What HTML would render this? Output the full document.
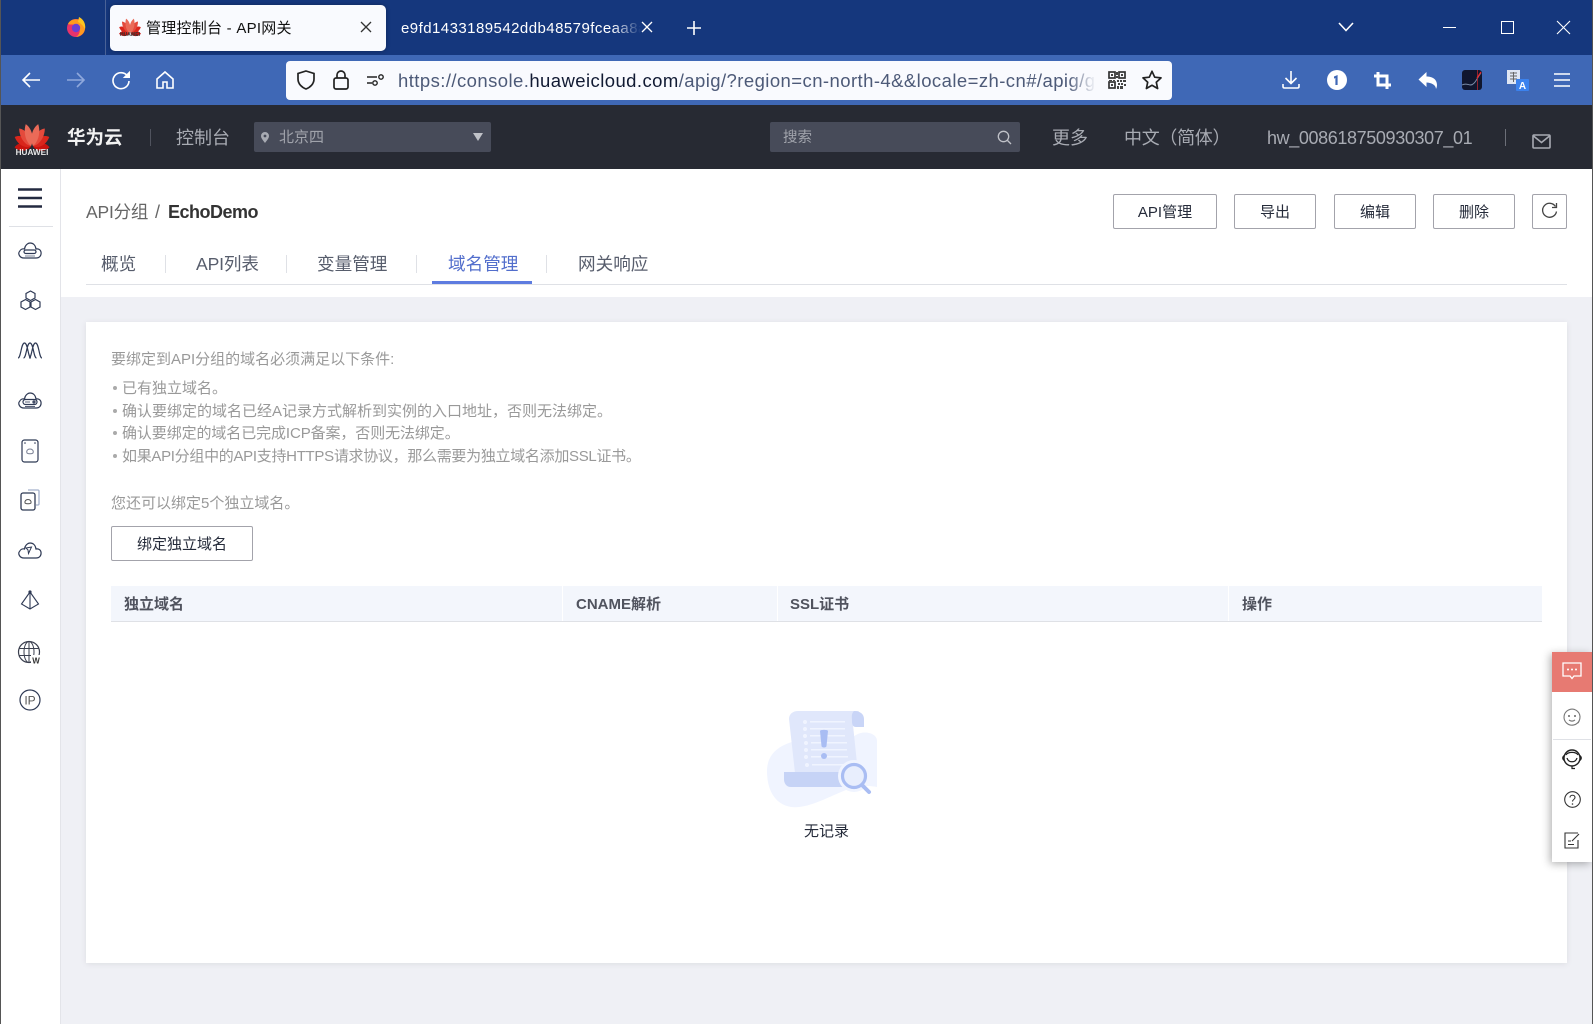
<!DOCTYPE html>
<html lang="zh-CN"><head><meta charset="utf-8"><title>管理控制台 - API网关</title>
<style>
html,body{margin:0;padding:0;width:1593px;height:1024px;overflow:hidden;background:#eff0f5;font-family:"Liberation Sans","Noto Sans CJK SC",sans-serif;}
.a{position:absolute;white-space:nowrap;}
.t{position:absolute;white-space:nowrap;line-height:24px;height:24px;}
.b{position:absolute;box-sizing:border-box;border:1px solid #a3a3ab;border-radius:2px;background:#fff;color:#252b3a;font-size:15px;text-align:center;white-space:nowrap;}
svg{position:absolute;overflow:visible;}
.w{fill:none;stroke:#fff;stroke-width:1.6;}
.k{fill:none;stroke:#1f2a44;stroke-width:1.5;}
.s{fill:none;stroke:#2f3a55;stroke-width:1.2;}
.g{fill:none;stroke:#333;stroke-width:1.1;}
.hd{font-weight:700;font-size:15px;color:#50535e;top:593px;}
.li{font-size:15px;color:#999;left:122px;}
.dot{position:absolute;left:113px;width:4px;height:4px;border-radius:50%;background:#aaa;}
.sp{position:absolute;width:1px;height:18px;top:255px;background:#dfe1e6;}
.tab{font-size:17.6px;color:#575d6c;top:252px;}
</style></head><body>
<svg width="1" height="1" style="position:absolute;left:-10px;top:-10px"><defs>
<g id="hw">
<g fill="#d9261c">
<path fill="#c8140f" d="M0 0C-5 -4 -5.500 -11 -3 -15.500C2 -12 3.500 -5 0 0Z" transform="translate(-1 .6) rotate(-80) scale(.9)"/>
<path d="M0 0C-5 -4 -5.500 -11 -3 -15.500C2 -12 3.500 -5 0 0Z" transform="translate(-1 .3) rotate(-54) scale(.98)"/>
<path fill="#e44a3c" d="M0 0C-5 -4 -5.500 -11 -3 -15.500C2 -12 3.500 -5 0 0Z" transform="translate(-1 0) rotate(-29)"/>
<path fill="#ea6a58" d="M0 0C-5 -4 -5.500 -11 -3 -15.500C2 -12 3.500 -5 0 0Z" transform="translate(-.8 0) rotate(-6)"/>
<path fill="#c8140f" d="M0 0C5 -4 5.500 -11 3 -15.500C-2 -12 -3.500 -5 0 0Z" transform="translate(1 .6) rotate(80) scale(.9)"/>
<path d="M0 0C5 -4 5.500 -11 3 -15.500C-2 -12 -3.500 -5 0 0Z" transform="translate(1 .3) rotate(54) scale(.98)"/>
<path fill="#e44a3c" d="M0 0C5 -4 5.500 -11 3 -15.500C-2 -12 -3.500 -5 0 0Z" transform="translate(1 0) rotate(29)"/>
<path fill="#ea6a58" d="M0 0C5 -4 5.500 -11 3 -15.500C-2 -12 -3.500 -5 0 0Z" transform="translate(.8 0) rotate(6)"/>
</g></g>
</defs></svg>

<!-- tab strip -->
<div class="a" style="left:0;top:0;width:1593px;height:55px;background:#15377d"></div>
<div class="a" style="left:0;top:55px;width:1593px;height:50px;background:#3f68b6"></div>
<div class="a" style="left:105px;top:0;width:1px;height:55px;background:#4a6296"></div>
<svg style="left:66px;top:17px" width="20" height="20" viewBox="0 0 20 20"><circle cx="10" cy="11" r="9" fill="#e8336b"/><path d="M2 7C5 0 16 1 19 8C20 14 17 19 10 20C15 17 15 10 10 8C7 7 4 8 2 7Z" fill="#ff9a1f"/><path d="M13 0C17 2 20 6 19 12C17 8 14 6 12 5Z" fill="#ffc61f"/><circle cx="10" cy="11" r="4.2" fill="#6b3fd4"/></svg>
<div class="a" style="left:110px;top:5px;width:276px;height:46px;background:#f9fafe;border-radius:5px;box-shadow:0 0 4px rgba(0,0,0,.3)"></div>
<svg style="left:120px;top:15px" width="20" height="20"><use href="#hw" transform="translate(10 18) scale(.72 .95)"/></svg>
<div class="t" style="left:120px;top:32px;font-size:5px;font-weight:700;color:#333;line-height:7px;height:7px;width:20px;text-align:center">HUAWEI</div>
<div class="t" style="left:146px;top:17px;font-size:15px;color:#111;letter-spacing:.25px">管理控制台 - API网关</div>
<svg style="left:361px;top:22px" width="10" height="10"><path d="M0 0L10 10M10 0L0 10" fill="none" stroke="#333" stroke-width="1.3"/></svg>
<div class="t" style="left:401px;top:17px;width:240px;overflow:hidden;font-size:15px;letter-spacing:.45px;color:#fff;-webkit-mask-image:linear-gradient(90deg,#000 88%,transparent);mask-image:linear-gradient(90deg,#000 88%,transparent)">e9fd1433189542ddb48579fceaa8a</div>
<svg style="left:642px;top:22px" width="10" height="10"><path d="M0 0L10 10M10 0L0 10" fill="none" stroke="#fff" stroke-width="1.3"/></svg>
<svg style="left:687px;top:21px" width="14" height="14"><path d="M7 0V14M0 7H14" fill="none" stroke="#fff" stroke-width="1.6"/></svg>
<svg style="left:1338px;top:22px" width="16" height="10"><path d="M1 1L8 8.5L15 1" class="w"/></svg>
<div class="a" style="left:1443px;top:27px;width:13px;height:1px;background:#fff"></div>
<div class="a" style="left:1501px;top:21px;width:11px;height:11px;border:1px solid #fff"></div>
<svg style="left:1557px;top:21px" width="13" height="13"><path d="M0 0L13 13M13 0L0 13" fill="none" stroke="#fff" stroke-width="1.1"/></svg>

<!-- toolbar -->
<svg style="left:21px;top:71px" width="20" height="18"><path d="M19 9H2M9 2L2 9L9 16" class="w"/></svg>
<svg style="left:66px;top:71px" width="20" height="18"><path d="M1 9H18M11 2L18 9L11 16" fill="none" stroke="#8fa8dc" stroke-width="1.6"/></svg>
<svg style="left:111px;top:70px" width="20" height="20"><path d="M16.5 6A8 8 0 1 0 18 11" class="w"/><path d="M18.5 2V7.5H13Z" fill="#fff" stroke="#fff"/></svg>
<svg style="left:156px;top:71px" width="18" height="18"><path d="M1 8L9 1L17 8V17H11V11H7V17H1Z" class="w"/></svg>
<div class="a" style="left:286px;top:61px;width:886px;height:39px;background:#f9fafe;border-radius:4px"></div>
<svg style="left:297px;top:70px" width="18" height="20"><path d="M9 1L17 3.5V9C17 14 13 17.5 9 19C5 17.5 1 14 1 9V3.5Z" class="k" style="stroke:#222;stroke-width:1.7"/></svg>
<svg style="left:333px;top:70px" width="16" height="20"><rect x="1" y="8" width="14" height="11" rx="2" class="k" style="stroke:#222;stroke-width:1.7"/><path d="M4 8V5A4 4 0 0 1 12 5V8" class="k" style="stroke:#222;stroke-width:1.7"/></svg>
<svg style="left:367px;top:74px" width="18" height="12"><path d="M0 3H10M0 9H5" fill="none" stroke="#222" stroke-width="1.5"/><circle cx="14" cy="3" r="2.2" fill="none" stroke="#222" stroke-width="1.4"/><circle cx="8" cy="9" r="2.2" fill="none" stroke="#222" stroke-width="1.4"/></svg>
<div class="t" style="left:398px;top:69px;width:698px;overflow:hidden;font-size:18.5px;letter-spacing:.43px;color:#4d5a78;-webkit-mask-image:linear-gradient(90deg,#000 96%,transparent);mask-image:linear-gradient(90deg,#000 96%,transparent)">https://console.<span style="color:#111a33">huaweicloud.com</span>/apig/?region=cn-north-4&amp;&amp;locale=zh-cn#/apig/g</div>
<svg style="left:1108px;top:71px" width="18" height="18"><g fill="none" stroke="#333" stroke-width="1.7"><rect x="1" y="1" width="6" height="6"/><rect x="11" y="1" width="6" height="6"/><rect x="1" y="11" width="6" height="6"/></g><g fill="#444"><rect x="3" y="3" width="2" height="2"/><rect x="13" y="3" width="2" height="2"/><rect x="3" y="13" width="2" height="2"/><rect x="9" y="9" width="2" height="2"/><rect x="12" y="9" width="2" height="2"/><rect x="15" y="9" width="3" height="2"/><rect x="10" y="12" width="2" height="2"/><rect x="13" y="12" width="2" height="2"/><rect x="16" y="13" width="2" height="2"/><rect x="9" y="15" width="2" height="3"/><rect x="12" y="15" width="3" height="3"/><rect x="8" y="1" width="2" height="3"/><rect x="8" y="5" width="2" height="2"/><rect x="1" y="9" width="3" height="1"/><rect x="5" y="9" width="2" height="1"/></g></svg>
<svg style="left:1142px;top:70px" width="20" height="20"><path d="M10 1.3L12.7 7.2L19 7.9L14.3 12.2L15.6 18.5L10 15.3L4.4 18.5L5.7 12.2L1 7.9L7.3 7.2Z" fill="none" stroke="#222" stroke-width="1.7" stroke-linejoin="round"/></svg>
<svg style="left:1282px;top:70px" width="18" height="20"><path d="M9 1V13M3.5 8L9 13.5L14.5 8M1 14V16.5C1 17.5 1.7 18 2.5 18H15.5C16.3 18 17 17.5 17 16.5V14" class="w"/></svg>
<svg style="left:1327px;top:70px" width="20" height="20"><circle cx="10" cy="10" r="10" fill="#fff"/><path d="M7 6.5L10.6 5V15H8.4V8L7 8.6Z" fill="#3f68b6"/></svg>
<svg style="left:1374px;top:72px" width="17" height="17"><path d="M4 0V13H17M0 4H13V17" fill="none" stroke="#fff" stroke-width="3"/></svg>
<svg style="left:1418px;top:72px" width="19" height="17"><path d="M8.5 0V4.5C14 4.5 19 7 19 13C19 14.500 18.500 16 18 17C18 13 13 10.500 8.500 10.500V15L0.500 7.500Z" fill="#fff"/></svg>
<svg style="left:1462px;top:70px" width="20" height="20"><rect width="20" height="20" rx="3" fill="#10162e"/><path d="M0 15C5 12 8 17 11 14C14 12 15 8 19 3" fill="none" stroke="#7a8ca8" stroke-width="1"/><path d="M15.500 0V20" stroke="#b3262e" stroke-width=".8"/><path d="M15 8L19 2" stroke="#e3282e" stroke-width="1.2"/></svg>
<svg style="left:1507px;top:70px" width="22" height="21"><rect x="0" y="0" width="13" height="14" fill="#dfe6f3"/><path d="M3 3H10M3 6H10M3 9H10M6.5 2V12" stroke="#666" stroke-width="1"/><rect x="9" y="9" width="13" height="12" rx="1" fill="#3b82ee"/><text x="15.5" y="19" font-size="10" font-weight="700" fill="#fff" text-anchor="middle" font-family="Liberation Sans">A</text></svg>
<svg style="left:1554px;top:73px" width="16" height="14"><path d="M0 1H16M0 7H16M0 13H16" class="w" style="stroke-width:1.4"/></svg>

<!-- header -->
<div class="a" style="left:0;top:105px;width:1593px;height:64px;background:#272a33"></div>
<svg style="left:12px;top:120px" width="40" height="28"><use href="#hw" transform="translate(20 26) scale(1.15 1.45)"/></svg>
<div class="t" style="left:12px;top:147px;width:40px;text-align:center;font-size:8.2px;font-weight:700;color:#e8e8e8;line-height:11px;height:11px">HUAWEI</div>
<div class="t" style="left:67px;top:126px;font-size:18.5px;font-weight:700;color:#f2f2f2">华为云</div>
<div class="a" style="left:150px;top:129px;width:1px;height:17px;background:#50535e"></div>
<div class="t" style="left:176px;top:126px;font-size:18px;color:#a8abb3">控制台</div>
<div class="a" style="left:254px;top:122px;width:237px;height:30px;background:#474b59;border-radius:2px"></div>
<svg style="left:261px;top:132px" width="8" height="11"><path d="M4 0A4 4 0 0 1 8 4C8 6.5 5 9.5 4 11C3 9.5 0 6.5 0 4A4 4 0 0 1 4 0Z" fill="#a8abb3"/><circle cx="4" cy="4" r="1.4" fill="#474b59"/></svg>
<div class="t" style="left:279px;top:126px;font-size:15px;color:#a0a3ab">北京四</div>
<svg style="left:473px;top:133px" width="10" height="8"><path d="M0 0H10L5 8Z" fill="#c0c2c8"/></svg>
<div class="a" style="left:770px;top:122px;width:250px;height:30px;background:#474b59;border-radius:2px"></div>
<div class="t" style="left:783px;top:126px;font-size:14.5px;color:#a0a3ab">搜索</div>
<svg style="left:997px;top:130px" width="15" height="15"><circle cx="6.5" cy="6.5" r="5.2" fill="none" stroke="#c0c2c8" stroke-width="1.3"/><path d="M10.5 10.5L14 14" stroke="#c0c2c8" stroke-width="1.3"/></svg>
<div class="t" style="left:1052px;top:126px;font-size:18px;color:#a8abb3">更多</div>
<div class="t" style="left:1124px;top:126px;font-size:18px;color:#a8abb3;letter-spacing:-.3px">中文（简体）</div>
<div class="t" style="left:1267px;top:126px;font-size:18px;color:#a8abb3;letter-spacing:-.38px">hw_008618750930307_01</div>
<div class="a" style="left:1505px;top:129px;width:1px;height:17px;background:#6c6f78"></div>
<svg style="left:1532px;top:134px" width="19" height="15"><rect x="1" y="1" width="17" height="13" rx="1" fill="none" stroke="#a8abb3" stroke-width="1.6"/><path d="M1.5 2L9.5 8.5L17.5 2" fill="none" stroke="#a8abb3" stroke-width="1.6"/></svg>

<!-- sidebar -->
<div class="a" style="left:0;top:169px;width:60px;height:855px;background:#fff;border-right:1px solid #e3e4e9"></div>
<svg style="left:18px;top:188px" width="24" height="20"><path d="M0 1.5H24M0 10H24M0 18.5H24" fill="none" stroke="#232a40" stroke-width="2.4"/></svg>
<div class="a" style="left:9px;top:226px;width:44px;height:1px;background:#dfe1e6"></div>
<svg style="left:18px;top:242px" width="24" height="17"><path d="M6 16C1 16 0 11 1.500 9.500C2.500 7 5 6.500 6.500 7C7 3 10 1 12 1C15 1 17.500 3 18 7C20 6.500 22.500 7.500 23 10C23.500 13 22 16 18 16Z" class="s"/><rect x="6" y="8" width="12" height="3.500" rx="1.700" class="s"/><path d="M7 14H17" fill="none" stroke="#7a8094" stroke-width="1"/></svg>
<svg style="left:20px;top:290px" width="21" height="21"><path d="M10.5 1L15 3.5V8L10.5 10.5L6 8V3.5Z M5.5 9.5L10 12V17L5.5 19.5L1 17V12Z M15.5 9.5L20 12V17L15.500 19.500L11 17V12Z" class="s"/></svg>
<svg style="left:18px;top:341px" width="24" height="18"><path d="M0 17C3 17 3 2 6.500 2C10 2 10 17 13 17M5.500 17C8.500 17 8.500 2 12 2C15.500 2 15.500 17 18.500 17M11 17C14 17 14 2 17.500 2C21 2 21 17 24 17" class="s"/></svg>
<svg style="left:18px;top:392px" width="24" height="17"><path d="M6 16C1 16 0 11 1.500 9.500C2.500 7 5 6.500 6.500 7C7 3 10 1 12 1C15 1 17.500 3 18 7C20 6.500 22.500 7.500 23 10C23.500 13 22 16 18 16Z" class="s"/><rect x="5" y="7.500" width="14" height="5" rx="2.500" class="s"/><circle cx="16" cy="10" r="1" class="s"/><path d="M7 10H12M7 14.500H17" fill="none" stroke="#5a6178" stroke-width="1"/></svg>
<svg style="left:21px;top:439px" width="18" height="24"><rect x="1" y="1" width="16" height="22" rx="2.500" class="s"/><circle cx="4" cy="4" r=".8" fill="#2f3a55"/><circle cx="14" cy="4" r=".8" fill="#2f3a55"/><path d="M6 14C5 11.500 7 10 9 10C11 10 13 11.500 12 14C11 15 7 15 6 14Z" fill="none" stroke="#7a8094" stroke-width="1"/></svg>
<svg style="left:20px;top:489px" width="20" height="22"><path d="M8 1H18C18.500 1 19 1.500 19 2V15C19 15.500 18.500 16 18 16H16" fill="none" stroke="#a3b0cc" stroke-width="1.300"/><rect x="1" y="4" width="14" height="17" rx="2" fill="#fff" stroke="#2f3a55" stroke-width="1.300"/><path d="M5 14C4.500 12 6 10.500 8 10.500C10 10.500 11.500 12 11 14C10 15 6 15 5 14Z" fill="none" stroke="#555" stroke-width="1"/></svg>
<svg style="left:18px;top:542px" width="24" height="17"><path d="M6 16C1 16 0 11 1.500 9.500C2.500 7 5 6.500 6.500 7C7 3 10 1 12 1C15 1 17.500 3 18 7C20 6.500 22.500 7.500 23 10C23.500 13 22 16 18 16Z" class="s"/><path d="M8 6L13.500 5L10.500 11.500L10 8Z" class="s" style="stroke-width:1"/></svg>
<svg style="left:20px;top:590px" width="20" height="21"><path d="M10 2L1.500 14L10 19L18.500 14Z M10 2V19" class="s" style="stroke-width:1.100"/><circle cx="10" cy="2" r="1.600" fill="#2f3a55"/></svg>
<svg style="left:18px;top:641px" width="24" height="24"><circle cx="11" cy="11" r="10.500" fill="none" stroke="#3a3f4e" stroke-width="1.200"/><ellipse cx="11" cy="11" rx="5" ry="10.500" fill="none" stroke="#3a3f4e" stroke-width="1"/><path d="M1 7.500H21M1 14.500H21M11 .5V21.500" fill="none" stroke="#3a3f4e" stroke-width="1"/><rect x="13" y="14" width="10" height="9" fill="#fff"/><text x="18" y="22.500" font-size="8" font-weight="700" fill="#333" text-anchor="middle" font-family="Liberation Sans">W</text></svg>
<svg style="left:19px;top:689px" width="22" height="22"><circle cx="11" cy="11" r="10" class="s"/><text x="11" y="15.500" font-size="12" fill="#555" text-anchor="middle" font-family="Liberation Sans">IP</text></svg>

<!-- page head -->
<div class="a" style="left:61px;top:169px;width:1532px;height:128px;background:#fff"></div>
<div class="t" style="left:86px;top:200px;font-size:17.500px;color:#666;letter-spacing:-.2px">API分组</div>
<div class="t" style="left:155px;top:200px;font-size:18px;color:#666">/</div>
<div class="t" style="left:168px;top:200px;font-size:18px;font-weight:700;color:#333;letter-spacing:-.5px">EchoDemo</div>
<div class="b" style="left:1113px;top:194px;width:104px;height:35px;line-height:34px;padding-top:1px">API管理</div>
<div class="b" style="left:1234px;top:194px;width:82px;height:35px;line-height:34px;padding-top:1px">导出</div>
<div class="b" style="left:1334px;top:194px;width:82px;height:35px;line-height:34px;padding-top:1px">编辑</div>
<div class="b" style="left:1433px;top:194px;width:82px;height:35px;line-height:34px;padding-top:1px">删除</div>
<div class="b" style="left:1532px;top:194px;width:35px;height:35px"></div>
<svg style="left:1541px;top:202px" width="17" height="17"><path d="M14.500 4.500A7 7 0 1 0 15.500 9.500" fill="none" stroke="#444" stroke-width="1.300"/><path d="M15.500 1V5.500H11" fill="none" stroke="#444" stroke-width="1.300"/></svg>
<div class="t tab" style="left:101px">概览</div>
<div class="sp" style="left:165px"></div>
<div class="t tab" style="left:196px;letter-spacing:-.15px">API列表</div>
<div class="sp" style="left:286px"></div>
<div class="t tab" style="left:317px">变量管理</div>
<div class="sp" style="left:416px"></div>
<div class="t tab" style="left:448px;color:#526ecc">域名管理</div>
<div class="sp" style="left:546px"></div>
<div class="t tab" style="left:578px">网关响应</div>
<div class="a" style="left:86px;top:284px;width:1481px;height:1px;background:#dfe1e6"></div>
<div class="a" style="left:432px;top:281px;width:100px;height:3px;background:#5e7ce0"></div>

<!-- card -->
<div class="a" style="left:86px;top:322px;width:1481px;height:641px;background:#fff;box-shadow:0 1px 6px rgba(0,0,0,.08)"></div>
<div class="t li" style="top:348px;left:111px">要绑定到API分组的域名必须满足以下条件:</div>
<div class="dot" style="top:386px"></div><div class="t li" style="top:377px">已有独立域名。</div>
<div class="dot" style="top:409px"></div><div class="t li" style="top:400px">确认要绑定的域名已经A记录方式解析到实例的入口地址，否则无法绑定。</div>
<div class="dot" style="top:431px"></div><div class="t li" style="top:422px;letter-spacing:-.1px">确认要绑定的域名已完成ICP备案，否则无法绑定。</div>
<div class="dot" style="top:454px"></div><div class="t li" style="top:445px;letter-spacing:-.3px">如果API分组中的API支持HTTPS请求协议，那么需要为独立域名添加SSL证书。</div>
<div class="t li" style="top:492px;left:111px">您还可以绑定5个独立域名。</div>
<div class="b" style="left:111px;top:526px;width:142px;height:35px;line-height:36px;font-size:15px">绑定独立域名</div>
<div class="a" style="left:111px;top:586px;width:1431px;height:35px;background:#f3f6fc;border-bottom:1px solid #dfe1e6"></div>
<div class="a" style="left:562px;top:586px;width:1px;height:35px;background:#fff"></div>
<div class="a" style="left:777px;top:586px;width:1px;height:35px;background:#fff"></div>
<div class="a" style="left:1228px;top:586px;width:1px;height:35px;background:#fff"></div>
<div class="t hd" style="left:124px">独立域名</div>
<div class="t hd" style="left:576px">CNAME解析</div>
<div class="t hd" style="left:790px">SSL证书</div>
<div class="t hd" style="left:1242px">操作</div>

<!-- empty state -->
<svg style="left:766px;top:711px" width="112" height="98" viewBox="0 0 112 98">
<path d="M111 30V76C100 74 92 75 80 79C62 86 42 98 25 96C8 93 1 78 1 60C1 44 12 34 30 30C50 28 78 32 90 24C98 19 111 22 111 30Z" fill="#f0f4ff"/>
<path d="M23 8C23 3 27 0 32 0H92C96 1 86 6 87 14L92 62H29Z" fill="#e0e7fb"/>
<path d="M88 0C94 0 98 3 98 8V16H90C87 16 86 14 86 10C86 6 85 3 88 0Z" fill="#c9d5f7"/>
<g fill="#f0f4ff"><circle cx="39" cy="11" r="2"/><circle cx="39" cy="18" r="2"/><circle cx="39" cy="25" r="2"/><circle cx="40" cy="32" r="2"/><circle cx="40" cy="39" r="2"/><circle cx="40" cy="46" r="2"/><circle cx="41" cy="54" r="2"/><rect x="44" y="10" width="35" height="1.500"/><rect x="44" y="17" width="35" height="1.500"/><rect x="44" y="24" width="35" height="1.500"/><rect x="45" y="31" width="36" height="1.500"/><rect x="45" y="38" width="36" height="1.500"/><rect x="45" y="45" width="37" height="1.500"/><rect x="46" y="53" width="34" height="1.500"/></g>
<path d="M54 20C54 18.500 62 18.500 62 20L60.500 35C60.500 37 55.500 37 55.500 35Z" fill="#a9bdf3"/><circle cx="58" cy="45" r="3" fill="#a9bdf3"/>
<path d="M18 61H78V76H25C20 76 18 72 18 68Z" fill="#c6d3f6"/>
<circle cx="88" cy="65" r="16" fill="#f0f4ff"/>
<circle cx="88" cy="65" r="11.500" fill="#e8eefd" stroke="#a9bdf3" stroke-width="3.200"/>
<path d="M97 75L103 81" stroke="#a9bdf3" stroke-width="4" stroke-linecap="round"/>
</svg>
<div class="t" style="left:804px;top:820px;font-size:15px;color:#252b3a">无记录</div>

<!-- float bar -->
<div class="a" style="left:1552px;top:652px;width:40px;height:210px;background:#fff;box-shadow:-2px 2px 8px rgba(0,0,0,.3)"></div>
<div class="a" style="left:1552px;top:652px;width:40px;height:40px;background:#e77a72"></div>
<svg style="left:1562px;top:662px" width="20" height="18"><path d="M1 1H19V14H12L10 16.500L8 14H1Z" fill="none" stroke="#fff" stroke-width="1.300"/><circle cx="6" cy="7.500" r="1" fill="#fff"/><circle cx="10" cy="7.500" r="1" fill="#fff"/><circle cx="14" cy="7.500" r="1" fill="#fff"/></svg>
<svg style="left:1563px;top:709px" width="18" height="17"><path d="M16.500 11A8 8 0 1 1 17 7.500C17 10 16.500 12 15 14" class="g" style="stroke:#777"/><circle cx="6" cy="7" r="1" fill="#666"/><circle cx="12" cy="7" r="1" fill="#666"/><path d="M6 11C8 12.500 10 12.500 12 11" class="g" style="stroke:#777"/></svg>
<div class="a" style="left:1553px;top:739px;width:38px;height:1px;background:#dfe1e6"></div>
<svg style="left:1561px;top:749px" width="22" height="21"><circle cx="11" cy="9" r="8" fill="none" stroke="#222" stroke-width="1.400"/><path d="M5 6C7 2.500 15 2.500 17 6" fill="none" stroke="#222" stroke-width="1.200"/><path d="M6 9C7.500 14 14.500 14 16 9" fill="none" stroke="#222" stroke-width="1.300"/><path d="M3 6C0.500 7.500 0.500 10.500 3 12ZM19 6C21.500 7.500 21.500 10.500 19 12Z" fill="#222"/><path d="M11 17V19.500H14" fill="none" stroke="#222" stroke-width="1.200"/></svg>
<svg style="left:1564px;top:791px" width="17" height="17"><circle cx="8.500" cy="8.500" r="7.800" class="g"/><path d="M6 6.500C6 3.500 11 3.500 11 6.500C11 8.500 8.500 8.500 8.500 10.500" class="g"/><circle cx="8.500" cy="13" r=".8" fill="#333"/></svg>
<svg style="left:1564px;top:832px" width="16" height="17"><path d="M14 8V16H1V1H14" class="g"/><path d="M4 9H7M4 12.500H10M8 9L15 2" class="g"/></svg>

<!-- window edges -->
<div class="a" style="left:0;top:0;width:1px;height:1024px;background:#555"></div>
<div class="a" style="left:1592px;top:0;width:1px;height:1024px;background:#555"></div>
</body></html>
